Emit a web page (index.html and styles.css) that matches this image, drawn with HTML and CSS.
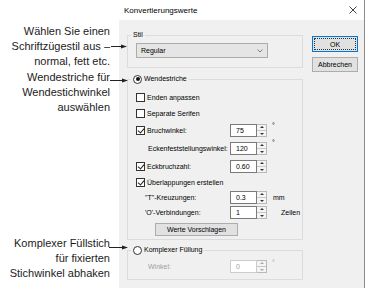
FILE: index.html
```html
<!DOCTYPE html>
<html lang="de">

<head>
    <meta charset="UTF-8">
    <title>Konvertierungswerte</title>
    <link rel="stylesheet" href="styles.css">
</head>

<body>
    <div class="page">
        <!-- callouts on the left -->
        <div class="notes">
            <div class="note note-stil">
                Wählen Sie einen<br>
                Schriftzügestil aus –<br>
                normal, fett etc.
                <svg class="arrow" width="16" height="7" viewBox="0 0 16 7">
                    <line x1="0" y1="3.5" x2="11" y2="3.5" stroke="#222" stroke-width="1" />
                    <polygon points="10,1.5 16,3.5 10,5.5" fill="#222" />
                </svg>
            </div>
            <div class="note note-wende">
                Wendestriche für<br>
                Wendestichwinkel<br>
                auswählen
                <svg class="arrow" width="18" height="7" viewBox="0 0 18 7">
                    <line x1="0" y1="3.5" x2="13" y2="3.5" stroke="#222" stroke-width="1" />
                    <polygon points="12,1.5 18,3.5 12,5.5" fill="#222" />
                </svg>
            </div>
            <div class="note note-komplex">
                Komplexer Füllstich<br>
                für fixierten<br>
                Stichwinkel abhaken
                <svg class="arrow" width="19" height="7" viewBox="0 0 19 7">
                    <line x1="0" y1="3.5" x2="14" y2="3.5" stroke="#222" stroke-width="1" />
                    <polygon points="13,1.5 19,3.5 13,5.5" fill="#222" />
                </svg>
            </div>
        </div>

        <div class="dialog">
            <div class="titlebar">
                <span>Konvertierungswerte</span>
                <svg class="close" width="8" height="8" viewBox="0 0 8 8">
                    <path d="M0.5 0.5 L7.5 7.5 M7.5 0.5 L0.5 7.5" stroke="#111" stroke-width="0.8" />
                </svg>
            </div>

            <div class="dialog-body">
                <div class="groups">
                    <fieldset class="group group-stil">
                        <legend>Stil</legend>
                        <div class="group-content">
                            <div class="select">
                                <span>Regular</span>
                                <svg width="6" height="4" viewBox="0 0 6 4">
                                    <path d="M0.5 0.5 L3 3 L5.5 0.5" fill="none" stroke="#666" stroke-width="0.8" />
                                </svg>
                            </div>
                        </div>
                    </fieldset>

                    <fieldset class="group group-wende">
                        <legend><span class="legend-inner"><span class="radio checked"></span>Wendestriche</span></legend>
                        <div class="group-content">
                            <div class="grid">
                                <div class="label full"><span class="check"></span>Enden anpassen</div>

                                <div class="label full"><span class="check"></span>Separate Serifen</div>

                                <div class="label"><span class="check checked"></span>Bruchwinkel:</div>
                                <div class="spin"><span class="spin-field">75</span><span class="spin-arrows"><i class="up"></i><i class="down"></i></span></div>
                                <div class="unit deg">°</div>

                                <div class="label indent">Eckenfeststellungswinkel:</div>
                                <div class="spin"><span class="spin-field">120</span><span class="spin-arrows"><i class="up"></i><i class="down"></i></span></div>
                                <div class="unit deg">°</div>

                                <div class="label"><span class="check checked"></span>Eckbruchzahl:</div>
                                <div class="spin"><span class="spin-field">0.60</span><span class="spin-arrows"><i class="up"></i><i class="down"></i></span></div>
                                <div class="unit"></div>

                                <div class="label full"><span class="check checked"></span>Überlappungen erstellen</div>

                                <div class="label sub">"T"-Kreuzungen:</div>
                                <div class="spin"><span class="spin-field">0.3</span><span class="spin-arrows"><i class="up"></i><i class="down"></i></span></div>
                                <div class="unit">mm</div>

                                <div class="label sub">'O'-Verbindungen:</div>
                                <div class="spin"><span class="spin-field">1</span><span class="spin-arrows"><i class="up"></i><i class="down"></i></span></div>
                                <div class="unit wide">Zeilen</div>
                            </div>
                            <button class="suggest">Werte Vorschlagen</button>
                        </div>
                    </fieldset>

                    <fieldset class="group group-komplex">
                        <legend><span class="legend-inner"><span class="radio"></span>Komplexer Füllung</span></legend>
                        <div class="group-content">
                            <div class="grid disabled">
                                <div class="label indent">Winkel:</div>
                                <div class="spin"><span class="spin-field">0</span><span class="spin-arrows"><i class="up"></i><i class="down"></i></span></div>
                                <div class="unit deg">°</div>
                            </div>
                        </div>
                    </fieldset>
                </div>

                <div class="buttons">
                    <button class="btn btn-default"><span>OK</span></button>
                    <button class="btn">Abbrechen</button>
                </div>
            </div>
        </div>
    </div>
</body>

</html>
```

FILE: styles.css
```css
:root {
    --dialog-bg: #f0f0f0;
    --group-border: #dcdcdc;
    --button-bg: #e1e1e1;
    --button-border: #adadad;
    --field-border: #7a7a7a;
    --disabled-text: #a0a0a0;
    --accent: #0078d7;
}

* {
    box-sizing: border-box;
}

body {
    margin: 0;
    background-color: #ffffff;
    font-family: "Liberation Sans", Arial, sans-serif;
    color: #000000;
}

.page {
    display: flex;
    width: 377px;
    height: 302px;
}

/* callouts */

.notes {
    width: 119px;
    font-size: 11px;
    line-height: 15px;
    color: #1b1b1b;
}

.note {
    position: relative;
    width: 110px;
    text-align: right;
}

.note-stil {
    margin-top: 24px;
}

.note-wende {
    margin-top: 1px;
}

.note-komplex {
    margin-top: 121px;
}

.arrow {
    position: absolute;
}

.note-stil .arrow {
    left: 111px;
    top: 19px;
}

.note-wende .arrow {
    left: 110px;
    top: 7px;
}

.note-komplex .arrow {
    left: 109px;
    top: 8px;
}

/* dialog */

.dialog {
    width: 246px;
    height: 288px;
    border-right: 1px solid #8c8c8c;
    display: flex;
    flex-direction: column;
    font-size: 7px;
}

.titlebar {
    height: 20px;
    display: flex;
    align-items: center;
    justify-content: space-between;
    padding: 0 7px 0 5px;
    font-size: 8px;
    background-color: #ffffff;
}

.dialog-body {
    flex: 1;
    display: flex;
    gap: 9px;
    padding: 10px 6px 0 8px;
    background-color: var(--dialog-bg);
}

.groups {
    width: 176px;
}

.group {
    margin: 0;
    padding: 0;
    min-width: 0;
    border: 1px solid var(--group-border);
}

.group legend {
    margin-left: 3px;
    padding: 0 2px;
    height: 10px;
    line-height: 10px;
}

.legend-inner {
    display: flex;
    align-items: center;
    gap: 2px;
}

.group-content {
    padding: 3px 8px 9px;
}

.group-wende {
    margin-top: 6px;
}

.group-wende .group-content {
    padding: 5px 8px 3px;
}

.group-komplex {
    margin-top: 5px;
}

.group-komplex .group-content {
    padding: 4px 8px 6px;
}

.select {
    width: 132px;
    height: 15px;
    display: flex;
    align-items: center;
    justify-content: space-between;
    padding: 0 4px;
    background-color: #e5e5e5;
    border: 1px solid #acacac;
}

/* checkbox / radio */

.radio {
    width: 9px;
    height: 9px;
    border: 1px solid #333333;
    border-radius: 50%;
    background-color: #ffffff;
    position: relative;
}

.radio.checked::after {
    content: "";
    position: absolute;
    left: 1.5px;
    top: 1.5px;
    width: 4px;
    height: 4px;
    border-radius: 50%;
    background-color: #111111;
}

.check {
    width: 9px;
    height: 9px;
    flex: none;
    border: 1px solid #333333;
    background-color: #ffffff;
    position: relative;
}

.check.checked::after {
    content: "";
    position: absolute;
    left: 2px;
    top: 0px;
    width: 3px;
    height: 5px;
    border: solid #222222;
    border-width: 0 1px 1px 0;
    transform: rotate(40deg);
}

.grid {
    display: grid;
    grid-template-columns: 94px 37px auto;
    grid-template-rows: 16px 17px 17px 19px 17px 15px 14px 16px;
    align-items: center;
}

.grid.disabled {
    grid-template-rows: 14px;
    color: var(--disabled-text);
}

.label {
    display: flex;
    align-items: center;
    gap: 2px;
    white-space: nowrap;
}

.label.full {
    grid-column: 1 / 4;
}

.label.indent {
    padding-left: 12px;
}

.label.sub {
    padding-left: 9px;
}

/* spin boxes */

.spin {
    display: flex;
    height: 13px;
}

.spin-field {
    width: 27px;
    padding-left: 5px;
    line-height: 11px;
    background-color: #ffffff;
    border: 1px solid var(--field-border);
}

.spin-arrows {
    width: 10px;
    display: flex;
    flex-direction: column;
    border: 1px solid #b9b9b9;
    border-left: none;
    background-color: #f4f4f4;
}

.spin-arrows i {
    flex: 1;
    position: relative;
}

.spin-arrows i.up {
    border-bottom: 1px solid #c8c8c8;
}

.spin-arrows i::after {
    content: "";
    position: absolute;
    left: 3px;
    border-left: 2px solid transparent;
    border-right: 2px solid transparent;
}

.spin-arrows i.up::after {
    top: 1px;
    border-bottom: 2px solid #333333;
}

.spin-arrows i.down::after {
    top: 2px;
    border-top: 2px solid #333333;
}

.disabled .spin-field {
    border-color: #cccccc;
}

.disabled .spin-arrows i::after {
    border-top-color: #a8a8a8;
    border-bottom-color: #a8a8a8;
}

.unit {
    padding-left: 6px;
}

.unit.deg {
    align-self: start;
    padding-left: 5px;
}

.unit.wide {
    padding-left: 14px;
}

/* buttons */

button {
    font-family: inherit;
    font-size: 7px;
    color: #000000;
    padding: 0;
    cursor: pointer;
}

.suggest {
    display: block;
    margin: 3px 0 0 19px;
    width: 83px;
    height: 13px;
    background-color: var(--button-bg);
    border: 1px solid var(--button-border);
}

.buttons {
    width: 46px;
    padding-top: 6px;
    display: flex;
    flex-direction: column;
    gap: 5px;
}

.btn {
    height: 15px;
    background-color: var(--button-bg);
    border: 1px solid var(--button-border);
}

.btn-default {
    height: 16px;
    padding: 1px;
    border-color: var(--accent);
}

.btn-default span {
    display: block;
    height: 100%;
    line-height: 12px;
    border: 1px dotted #333333;
}
```
